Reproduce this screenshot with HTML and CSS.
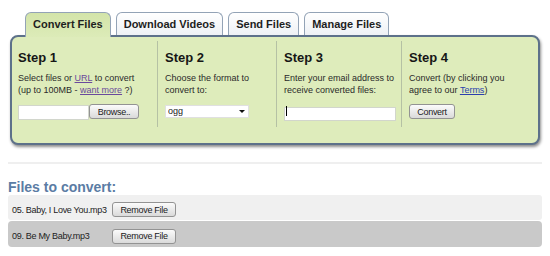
FILE: index.html
```html
<!DOCTYPE html>
<html lang="en">
<head>
    <meta charset="UTF-8">
    <title>Convert Files</title>
    <link rel="stylesheet" href="styles.css">
</head>
<body>
    <div class="tabs">
        <a class="tab active">Convert Files</a>
        <a class="tab">Download Videos</a>
        <a class="tab">Send Files</a>
        <a class="tab">Manage Files</a>
    </div>
    <div class="panel">
        <div class="step step-1">
            <h2>Step 1</h2>
            <p>Select files or <a class="visited" href="#">URL</a> to convert<br>(up to 100MB - <a class="visited" href="#">want more</a> ?)</p>
            <div class="controls">
                <input type="text" class="file-field">
                <button class="btn browse">Browse..</button>
            </div>
        </div>
        <div class="step step-2">
            <h2>Step 2</h2>
            <p>Choose the format to<br>convert to:</p>
            <div class="controls">
                <div class="select-wrap">
                    <select class="format">
                        <option>ogg</option>
                    </select>
                </div>
            </div>
        </div>
        <div class="step step-3">
            <h2>Step 3</h2>
            <p>Enter your email address to<br>receive converted files:</p>
            <div class="controls">
                <div class="email-wrap">
                    <input type="text" class="email">
                    <span class="caret"></span>
                </div>
            </div>
        </div>
        <div class="step step-4">
            <h2>Step 4</h2>
            <p>Convert (by clicking you<br>agree to our <a href="#">Terms</a>)</p>
            <div class="controls">
                <button class="btn convert">Convert</button>
            </div>
        </div>
    </div>

    <div class="separator"></div>

    <h3 class="files-title">Files to convert:</h3>
    <div class="file-row">
        <span class="file-name">05. Baby, I Love You.mp3</span>
        <button class="btn remove">Remove File</button>
    </div>
    <div class="file-row alt">
        <span class="file-name">09. Be My Baby.mp3</span>
        <button class="btn remove">Remove File</button>
    </div>
</body>
</html>
```

FILE: styles.css
```css
* {
    box-sizing: border-box;
}

body {
    margin: 0;
    padding: 12px 8px 0;
    font-family: "Liberation Sans", Arial, sans-serif;
    color: #222;
    background: #fff;
}

/* tabs */
.tabs {
    display: flex;
    align-items: flex-end;
    gap: 5px;
    padding-left: 17px;
    position: relative;
    z-index: 1;
}

.tab {
    display: block;
    font-size: 11px;
    font-weight: bold;
    line-height: 14px;
    padding: 4px 7px;
    color: #1e1e1e;
    border: 1px solid #93a3b6;
    border-bottom: none;
    border-radius: 6px 6px 0 0;
    background: linear-gradient(#ffffff, #eef1f5);
}

.tab.active {
    background: linear-gradient(#d3e4a9, #dcebb8);
    padding-bottom: 6px;
    margin-bottom: -2px;
}

/* green panel */
.panel {
    display: flex;
    margin: 0 2px;
    padding: 4px 0 16px 0;
    background: #deecbb;
    border: 2px solid #5d718a;
    border-radius: 8px;
    box-shadow: 1px 2px 3px rgba(0, 0, 0, 0.45);
}

.step {
    padding: 9px 4px 8px 7px;
    border-left: 1px solid #b5c1a4;
}

.step-1 {
    width: 145px;
    padding-left: 6px;
    border-left: none;
}

.step-2 {
    width: 119px;
}

.step-3 {
    width: 125px;
}

.step-4 {
    flex: 1;
}

.step h2 {
    margin: 0 0 6px;
    font-size: 13px;
    line-height: 16px;
    font-weight: bold;
    color: #161616;
}

.step p {
    margin: 0;
    font-size: 9px;
    line-height: 12px;
    color: #2a2a2a;
    white-space: nowrap;
}

.step p a {
    color: #2b3fae;
}

.step p a.visited {
    color: #6a4a9c;
}

.controls {
    display: flex;
    margin-top: 8px;
    height: 15px;
}

input, select {
    font-family: inherit;
}

.file-field {
    width: 71px;
    height: 15px;
    margin: 1px 0 0;
    border: 1px solid #d2d6cc;
    background: #fff;
}

.btn {
    height: 15px;
    padding: 0;
    font-family: inherit;
    font-size: 9px;
    letter-spacing: -0.3px;
    color: #1a1a1a;
    border: 1px solid #939393;
    border-radius: 3px;
    background: linear-gradient(#fbfbfb, #dadada);
}

.browse {
    width: 50px;
}

.convert {
    width: 46px;
}

.select-wrap {
    position: relative;
    width: 84px;
    height: 13px;
    margin-top: 1px;
}

.format {
    appearance: none;
    display: block;
    width: 100%;
    height: 13px;
    padding: 0 0 0 2px;
    font-size: 9px;
    line-height: 11px;
    color: #222;
    border: 1px solid #e0e0e0;
    border-radius: 0;
    background: #fff;
}

.select-wrap::after {
    content: "";
    position: absolute;
    right: 4px;
    top: 5px;
    border-left: 3px solid transparent;
    border-right: 3px solid transparent;
    border-top: 3px solid #111;
}

.email-wrap {
    position: relative;
    width: 112px;
    height: 14px;
}

.email {
    width: 100%;
    height: 100%;
    border: 1px solid #d2d6cc;
    background: #fff;
}

.caret {
    position: absolute;
    left: 2px;
    top: 2px;
    width: 1px;
    height: 10px;
    background: #000;
}

/* file list */
.separator {
    margin-top: 17px;
    border-top: 2px solid #efefef;
}

.files-title {
    margin: 15px 0 0;
    font-size: 14px;
    line-height: 16px;
    font-weight: bold;
    color: #5b7ca4;
}

.file-row {
    display: flex;
    align-items: center;
    height: 25px;
    padding: 4px 4px 0;
    background: #f0f0f0;
    border-radius: 3px;
}

.file-row.alt {
    height: 26px;
    margin-top: 1px;
    background: #c9c9c9;
    border-radius: 4px;
}

.file-name {
    width: 100px;
    font-size: 9px;
    letter-spacing: -0.3px;
    color: #222;
    white-space: nowrap;
}

.remove {
    width: 64px;
}
```
